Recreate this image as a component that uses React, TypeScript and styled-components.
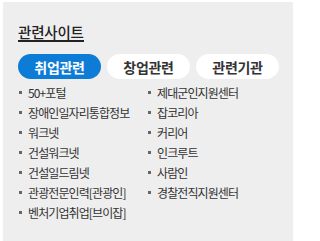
import React, { useState } from "react";
import styled, { createGlobalStyle } from "styled-components";

const GlobalStyle = createGlobalStyle`
  body {
    margin: 0;
    background: #fff;
    font-family: "Noto Sans CJK KR", "Noto Sans", sans-serif;
  }
`;

const tabs = ["취업관련", "창업관련", "관련기관"];

const sites = [
  "50+포털",
  "장애인일자리통합정보",
  "워크넷",
  "건설워크넷",
  "건설일드림넷",
  "관광전문인력[관광인]",
  "벤처기업취업[브이잡]",
  "제대군인지원센터",
  "잡코리아",
  "커리어",
  "인크루트",
  "사람인",
  "경찰전직지원센터",
];

const App: React.FC = () => {
  const [active, setActive] = useState(0);

  return (
    <>
      <GlobalStyle />
      <Panel>
        <Title>관련사이트</Title>
        <TabRow>
          {tabs.map((tab, i) => (
            <Tab key={tab} $active={i === active} onClick={() => setActive(i)}>
              {tab}
            </Tab>
          ))}
        </TabRow>
        <SiteList>
          {sites.map((site) => (
            <SiteItem key={site}>{site}</SiteItem>
          ))}
        </SiteList>
      </Panel>
    </>
  );
};

export default App;

const Panel = styled.section`
  box-sizing: border-box;
  width: 290px;
  height: 239px;
  margin: 2px 0 0 3px;
  padding: 17px 0 0 15px;
  background: #eeeeee;
`;

const Title = styled.h2`
  display: inline-block;
  margin: 0;
  font-size: 14.5px;
  line-height: 17px;
  font-weight: 500;
  letter-spacing: -0.2px;
  color: #222;
  border-bottom: 2px solid #222;
`;

const TabRow = styled.div`
  display: flex;
  gap: 6px;
  margin-top: 11px;
`;

const Tab = styled.button<{ $active: boolean }>`
  width: 83px;
  height: 25px;
  padding: 0;
  border: 0;
  border-radius: 13px;
  font-family: inherit;
  font-size: 14px;
  font-weight: 700;
  letter-spacing: -0.3px;
  cursor: pointer;
  background: ${(p) => (p.$active ? "#0d7cd6" : "#fff")};
  color: ${(p) => (p.$active ? "#fff" : "#333")};
`;

const SiteList = styled.ul`
  display: grid;
  grid-auto-flow: column;
  grid-template-rows: repeat(7, 20px);
  grid-template-columns: 129px 129px;
  margin: 3px 0 0;
  padding: 0;
  list-style: none;
`;

const SiteItem = styled.li`
  display: flex;
  align-items: center;
  font-size: 12px;
  letter-spacing: -0.9px;
  color: #333;
  white-space: nowrap;

  &::before {
    content: "";
    flex: none;
    width: 3px;
    height: 3px;
    margin: 1px 6px 0 1px;
    background: #666;
  }
`;
